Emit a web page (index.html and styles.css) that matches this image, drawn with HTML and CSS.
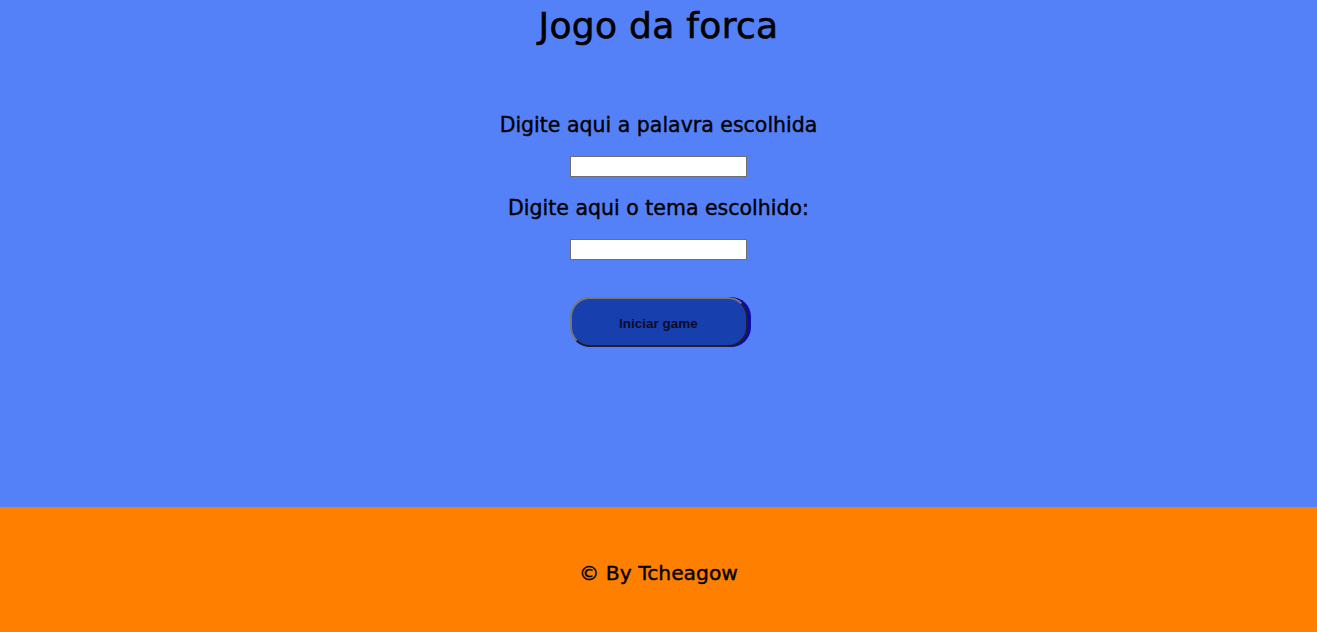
FILE: index.html
```html
<!DOCTYPE html>
<html lang="pt-BR">
<head>
<meta charset="utf-8">
<title>Jogo da forca</title>
<link rel="stylesheet" href="styles.css">
</head>
<body>
<main class="stage">
  <h1 class="title">Jogo da forca</h1>
  <form class="setup">
    <label class="label" for="palavra">Digite aqui a palavra escolhida</label>
    <input class="field" id="palavra" type="text">
    <label class="label" for="tema">Digite aqui o tema escolhido:</label>
    <input class="field" id="tema" type="text">
    <button class="start" type="button">Iniciar game</button>
  </form>
</main>
<footer class="footer">
  <p class="credit">© By Tcheagow</p>
</footer>
</body>
</html>
```
FILE: styles.css
```css
html, body {
  margin: 0;
  padding: 0;
}
body {
  font-family: "DejaVu Sans", "Noto Sans", sans-serif;
  color: #000;
}
.stage {
  background: #5480f8;
  height: 507px;
  box-sizing: border-box;
  padding-top: 4px;
  display: flex;
  flex-direction: column;
  align-items: center;
}
.title {
  margin: 0 0 65px;
  font-size: 36px;
  line-height: 44px;
  letter-spacing: 0.3px;
  font-weight: normal;
  -webkit-text-stroke: 0.6px #000;
}
.setup {
  display: flex;
  flex-direction: column;
  align-items: center;
  gap: 19px;
}
.label {
  font-size: 20.5px;
  line-height: 24px;
  -webkit-text-stroke: 0.4px #000;
}
.field {
  box-sizing: border-box;
  width: 177px;
  height: 21px;
  margin: 0;
  border: 1px solid #6e6e6e;
  background: #fff;
  padding: 1px 2px;
}
.start {
  box-sizing: border-box;
  margin-top: 18px;
  width: 178px;
  height: 50px;
  border-radius: 20px;
  border: 2px solid;
  border-color: #777 #1e1e2e #1e1e2e #777;
  background: #173fae;
  box-shadow: 3px 0 0 #0a0aa8;
  font-family: "Liberation Sans", Arial, sans-serif;
  font-weight: bold;
  font-size: 13.5px;
  color: #0b0b2a;
  padding: 2px 0 0;
}
.footer {
  background: #ff8000;
  height: 125px;
  display: flex;
  align-items: center;
  justify-content: center;
  padding-top: 7px;
  box-sizing: border-box;
}
.credit {
  margin: 0;
  font-size: 20.3px;
  line-height: 24px;
  -webkit-text-stroke: 0.4px #000;
}
```
